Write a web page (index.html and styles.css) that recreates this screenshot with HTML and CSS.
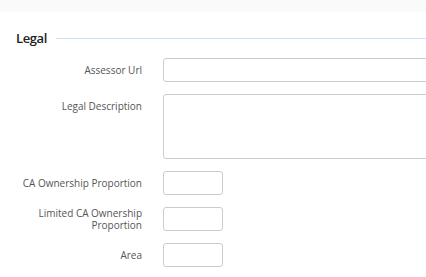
FILE: index.html
```html
<!DOCTYPE html>
<html lang="en">
<head>
    <meta charset="UTF-8">
    <meta name="viewport" content="width=device-width, initial-scale=1.0">
    <title>Legal</title>
    <link rel="stylesheet" href="styles.css">
</head>
<body>
    <div class="topbar"></div>

    <div class="section">
        <div class="legend">
            <span class="legend-title">Legal</span>
            <span class="legend-line"></span>
        </div>

        <div class="form-clip">
            <form class="form">
                <label class="form-label" for="assessorUrl">Assessor Url</label>
                <input class="form-input wide" type="text" id="assessorUrl">

                <label class="form-label" for="legalDesc">Legal Description</label>
                <textarea class="form-input wide area-box" id="legalDesc"></textarea>

                <label class="form-label" for="caOwn">CA Ownership Proportion</label>
                <input class="form-input small" type="text" id="caOwn">

                <label class="form-label" for="limitedCaOwn">Limited CA Ownership Proportion</label>
                <input class="form-input small" type="text" id="limitedCaOwn">

                <label class="form-label" for="area">Area</label>
                <input class="form-input small" type="text" id="area">
            </form>
        </div>
    </div>
</body>
</html>
```

FILE: styles.css
```css
body {
    margin: 0;
    font-family: "Open Sans", "Noto Sans", sans-serif;
    background-color: #fff;
    overflow: hidden;
}

.topbar {
    height: 12px;
    background-color: #fafafa;
}

.section {
    padding: 18px 0 0 16px;
}

.legend {
    display: flex;
    align-items: center;
    height: 16px;
}

.legend-title {
    font-size: 13px;
    font-weight: 600;
    letter-spacing: -0.4px;
    color: #222;
}

.legend-line {
    flex: 1;
    height: 1px;
    margin-left: 9px;
    background-color: #cfe0fb;
}

.form-clip {
    overflow: hidden;
}

.form {
    display: grid;
    grid-template-columns: 126px 1fr;
    column-gap: 21px;
    row-gap: 12px;
    align-items: start;
    margin-top: 12px;
}

.form-label {
    min-height: 24px;
    display: flex;
    align-items: center;
    justify-content: flex-end;
    text-align: right;
    font-size: 10px;
    line-height: 12px;
    color: #555;
}

.form-input {
    box-sizing: border-box;
    height: 24px;
    border: 1px solid #ccc;
    border-radius: 3px;
    padding: 4px 6px;
    font-family: inherit;
    font-size: 11px;
    background-color: #fff;
}

.wide {
    width: calc(100% + 10px);
}

.area-box {
    height: 65px;
    resize: none;
    display: block;
}

.small {
    width: 60px;
}
```
